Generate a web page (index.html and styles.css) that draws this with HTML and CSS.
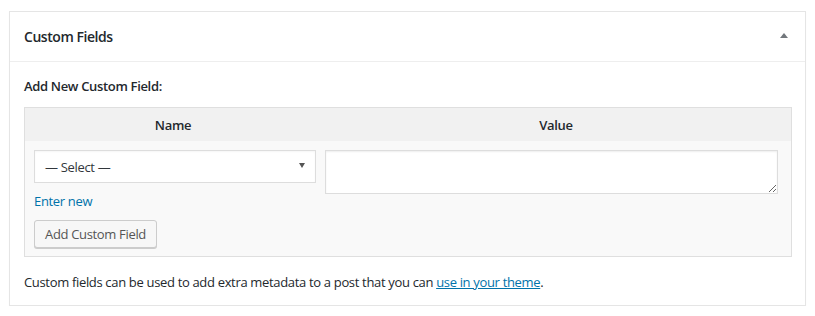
FILE: index.html
```html
<!DOCTYPE html>
<html lang="en">
<head>
    <meta charset="UTF-8">
    <title>Custom Fields</title>
    <link rel="stylesheet" href="styles.css">
</head>
<body>
    <div class="postbox">
        <div class="postbox-header">
            <h2 class="hndle">Custom Fields</h2>
            <span class="toggle-indicator"></span>
        </div>
        <div class="inside">
            <p class="new-label"><strong>Add New Custom Field:</strong></p>
            <table class="newmeta">
                <thead>
                    <tr>
                        <th class="col-name">Name</th>
                        <th class="col-value">Value</th>
                    </tr>
                </thead>
                <tbody>
                    <tr>
                        <td class="col-name">
                            <div class="select-box">
                                <span>— Select —</span>
                                <span class="select-arrow"></span>
                            </div>
                            <a href="#" class="enter-new">Enter new</a>
                            <div class="submit">
                                <button type="button" class="button">Add Custom Field</button>
                            </div>
                        </td>
                        <td class="col-value">
                            <textarea class="meta-value"></textarea>
                        </td>
                    </tr>
                </tbody>
            </table>
            <p class="help">Custom fields can be used to add extra metadata to a post that you can <a href="#">use in your theme</a>.</p>
        </div>
    </div>
</body>
</html>
```

FILE: styles.css
```css
body {
    margin: 0;
    padding: 11px 9px 0 9px;
    background: #fff;
    font-family: 'Open Sans', sans-serif;
    font-size: 13px;
    letter-spacing: -0.33px;
    color: #23282d;
}
.postbox {
    width: 795px;
    border: 1px solid #e5e5e5;
    box-shadow: 0 1px 1px rgba(0, 0, 0, 0.04);
    background: #fff;
}
.postbox-header {
    display: flex;
    align-items: center;
    justify-content: space-between;
    height: 49px;
    padding: 0 17px 0 14px;
    border-bottom: 1px solid #eee;
}
.hndle {
    margin: 0;
    font-size: 14px;
    font-weight: 600;
    letter-spacing: -0.45px;
    line-height: 1.4;
}
.toggle-indicator {
    width: 0;
    height: 0;
    border-left: 4px solid transparent;
    border-right: 4px solid transparent;
    border-bottom: 5px solid #72777c;
    margin-top: -3px;
}
.inside {
    padding: 0 14px 0 14px;
}
.new-label {
    margin: 0;
    padding: 14px 0 11px 0;
    line-height: 20px;
}
.new-label strong {
    font-weight: 600;
}
.newmeta {
    width: 768px;
    border: 1px solid #dfdfdf;
    border-collapse: collapse;
    background: #f9f9f9;
    table-layout: fixed;
}
.newmeta thead th {
    background: #f1f1f1;
    height: 33px;
    padding: 0;
    line-height: 18px;
    font-weight: 600;
    text-align: center;
}
.newmeta th.col-name {
    width: 296px;
}
.newmeta td {
    vertical-align: top;
    padding: 9px 5px 8px 9px;
}
.newmeta td.col-value {
    padding-left: 4px;
    padding-right: 13px;
}
.select-box {
    box-sizing: border-box;
    display: flex;
    align-items: center;
    justify-content: space-between;
    width: 282px;
    height: 33px;
    padding: 0 10px 0 10px;
    border: 1px solid #ddd;
    background: #fff;
    color: #32373c;
    box-shadow: inset 0 1px 2px rgba(0, 0, 0, 0.04);
}
.select-arrow {
    width: 0;
    height: 0;
    border-left: 3px solid transparent;
    border-right: 3px solid transparent;
    border-top: 5px solid #555;
    margin-top: -2px;
}
.enter-new {
    display: block;
    margin-top: 9px;
    color: #0073aa;
    text-decoration: none;
    line-height: 18px;
}
.submit {
    margin-top: 10px;
}
.button {
    height: 28px;
    padding: 0 10px 1px;
    font-family: inherit;
    font-size: 13px;
    letter-spacing: -0.33px;
    color: #555;
    background: #f7f7f7;
    border: 1px solid #ccc;
    border-radius: 3px;
    box-shadow: 0 1px 0 #ccc;
    cursor: pointer;
}
.meta-value {
    display: block;
    box-sizing: border-box;
    width: 453px;
    height: 44px;
    margin: 0;
    border: 1px solid #ddd;
    box-shadow: inset 0 1px 2px rgba(0, 0, 0, 0.07);
    background: #fff;
}
.help {
    margin: 0;
    padding: 16px 0 14px 0;
    line-height: 18px;
}
.help a {
    color: #0073aa;
}
```
